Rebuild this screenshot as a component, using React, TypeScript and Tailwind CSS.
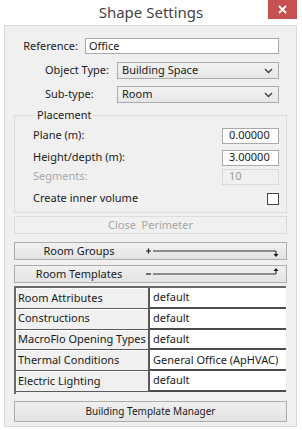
import React from 'react';

const font = { fontFamily: '"Noto Sans", "Open Sans", Arial, sans-serif' };

const Chevron: React.FC = () => (
  <svg width="9" height="6" viewBox="0 0 9 6" className="text-[#404040]">
    <path d="M1 1l3.5 3.5L8 1" fill="none" stroke="currentColor" strokeWidth="1.4" />
  </svg>
);

const Select: React.FC<{ value: string }> = ({ value }) => (
  <div className="flex h-[17px] w-[162px] items-center justify-between border border-[#acacac] bg-gradient-to-b from-[#f2f2f2] to-[#e6e6e6] pl-[4px] pr-[5px] text-[11px] text-[#1a1a1a]">
    <span>{value}</span>
    <Chevron />
  </div>
);

const NumField: React.FC<{ value: string; disabled?: boolean }> = ({ value, disabled }) => (
  <div
    className={`flex h-[16px] w-[57px] items-center border pl-[6px] text-[11px] ${
      disabled ? 'border-[#d9d9d9] bg-[#f0f0f0] text-[#9a9a9a]' : 'border-[#a9a9a9] bg-white text-[#1a1a1a]'
    }`}
  >
    {value}
  </div>
);

const ToggleButton: React.FC<{ label: string; open: boolean }> = ({ label, open }) => (
  <div className="flex h-[18px] items-center border border-[#adadad] bg-gradient-to-b from-[#f0f0f0] to-[#e3e3e3] text-[11px] text-[#1a1a1a]">
    <span className="w-[128px] text-center">{label}</span>
    <svg width="140" height="14" viewBox="0 0 140 14" className="ml-[1px]">
      {open ? (
        <path d="M2 7h5M4.5 4.5v5" stroke="#1a1a1a" strokeWidth="1.2" />
      ) : (
        <path d="M2 7h5" stroke="#1a1a1a" strokeWidth="1.2" />
      )}
      <path d="M9 7h123" stroke="#1a1a1a" strokeWidth="0.9" />
      {open ? (
        <>
          <path d="M132 7v4" stroke="#1a1a1a" strokeWidth="1" />
          <path d="M129.5 10h5l-2.5 3z" fill="#1a1a1a" />
        </>
      ) : (
        <>
          <path d="M132 7V3" stroke="#1a1a1a" strokeWidth="1" />
          <path d="M129.5 4h5L132 1z" fill="#1a1a1a" />
        </>
      )}
    </svg>
  </div>
);

const rows: [string, string][] = [
  ['Room Attributes', 'default'],
  ['Constructions', 'default'],
  ['MacroFlo Opening Types', 'default'],
  ['Thermal Conditions', 'General Office (ApHVAC)'],
  ['Electric Lighting', 'default'],
];

export default function App() {
  return (
    <div className="relative h-[430px] w-[302px] bg-white" style={font}>
      {/* title bar */}
      <div className="flex h-[25px] items-center justify-center text-[15px] text-[#444444]">Shape Settings</div>
      <div className="absolute right-[5px] top-0 flex h-[19px] w-[29px] items-center justify-center bg-[#c75050]">
        <svg width="9" height="9" viewBox="0 0 9 9">
          <path d="M1 1l7 7M8 1l-7 7" stroke="white" strokeWidth="1.8" />
        </svg>
      </div>

      {/* body */}
      <div className="ml-[4px] mr-[5px] h-[402px] border border-[#dadada] bg-[#f0f0f0] px-[9px] text-[11px] text-[#1a1a1a]">
        <div className="mt-[12px] flex h-[16px] items-center">
          <span className="w-[64px] text-right">Reference:</span>
          <div className="ml-[7px] flex h-[16px] w-[194px] items-center border border-[#a9a9a9] bg-white pl-[3px]">Office</div>
        </div>
        <div className="mt-[8px] flex h-[17px] items-center">
          <span className="ml-[31px] w-[72px]">Object Type:</span>
          <Select value="Building Space" />
        </div>
        <div className="mt-[7px] flex h-[17px] items-center">
          <span className="ml-[31px] w-[72px]">Sub-type:</span>
          <Select value="Room" />
        </div>

        <fieldset className="mt-[4px] h-[106px] border border-[#dcdcdc] pl-[18px] pr-[7px]">
          <legend className="ml-[2px] px-[2px] text-[11px]">Placement</legend>
          <div className="mt-[4px] flex h-[16px] items-center justify-between">
            <span>Plane (m):</span>
            <NumField value="0.00000" />
          </div>
          <div className="mt-[6px] flex h-[16px] items-center justify-between">
            <span>Height/depth (m):</span>
            <NumField value="3.00000" />
          </div>
          <div className="mt-[3px] flex h-[16px] items-center justify-between">
            <span className="text-[#a8a8a8]">Segments:</span>
            <NumField value="10" disabled />
          </div>
          <div className="mt-[7px] flex h-[14px] items-center justify-between">
            <span>Create inner volume</span>
            <div className="h-[12px] w-[12px] border border-[#444444] bg-white" />
          </div>
        </fieldset>

        <div className="mt-[3px] flex h-[18px] items-center justify-center border border-[#dcdcdc] bg-[#f0f0f0] text-[#a6a6a6]">
          Close&nbsp; Perimeter
        </div>
        <div className="mt-[8px]">
          <ToggleButton label="Room Groups" open />
        </div>
        <div className="mt-[5px]">
          <ToggleButton label="Room Templates" open={false} />
        </div>

        <div className="mt-[3px] h-[108px] w-[272px] border-l-2 border-t-2 border-[#6a6a6a]">
          {rows.map(([k, v]) => (
            <div key={k} className="flex h-[20.8px]">
              <div className="flex w-[134px] items-center border-b border-r-2 border-[#5a5a5a] bg-[#f0f0f0] pl-[2px] shadow-[inset_1px_1px_0_#ffffff]">
                {k}
              </div>
              <div className="flex flex-1 items-center border-b-2 border-[#4a4a4a] bg-white pl-[3px]">{v}</div>
            </div>
          ))}
        </div>

        <div className="mt-[7px] flex h-[21px] items-center justify-center border border-[#adadad] bg-gradient-to-b from-[#f0f0f0] to-[#e3e3e3] text-[10px]">
          Building Template Manager
        </div>
      </div>
    </div>
  );
}
